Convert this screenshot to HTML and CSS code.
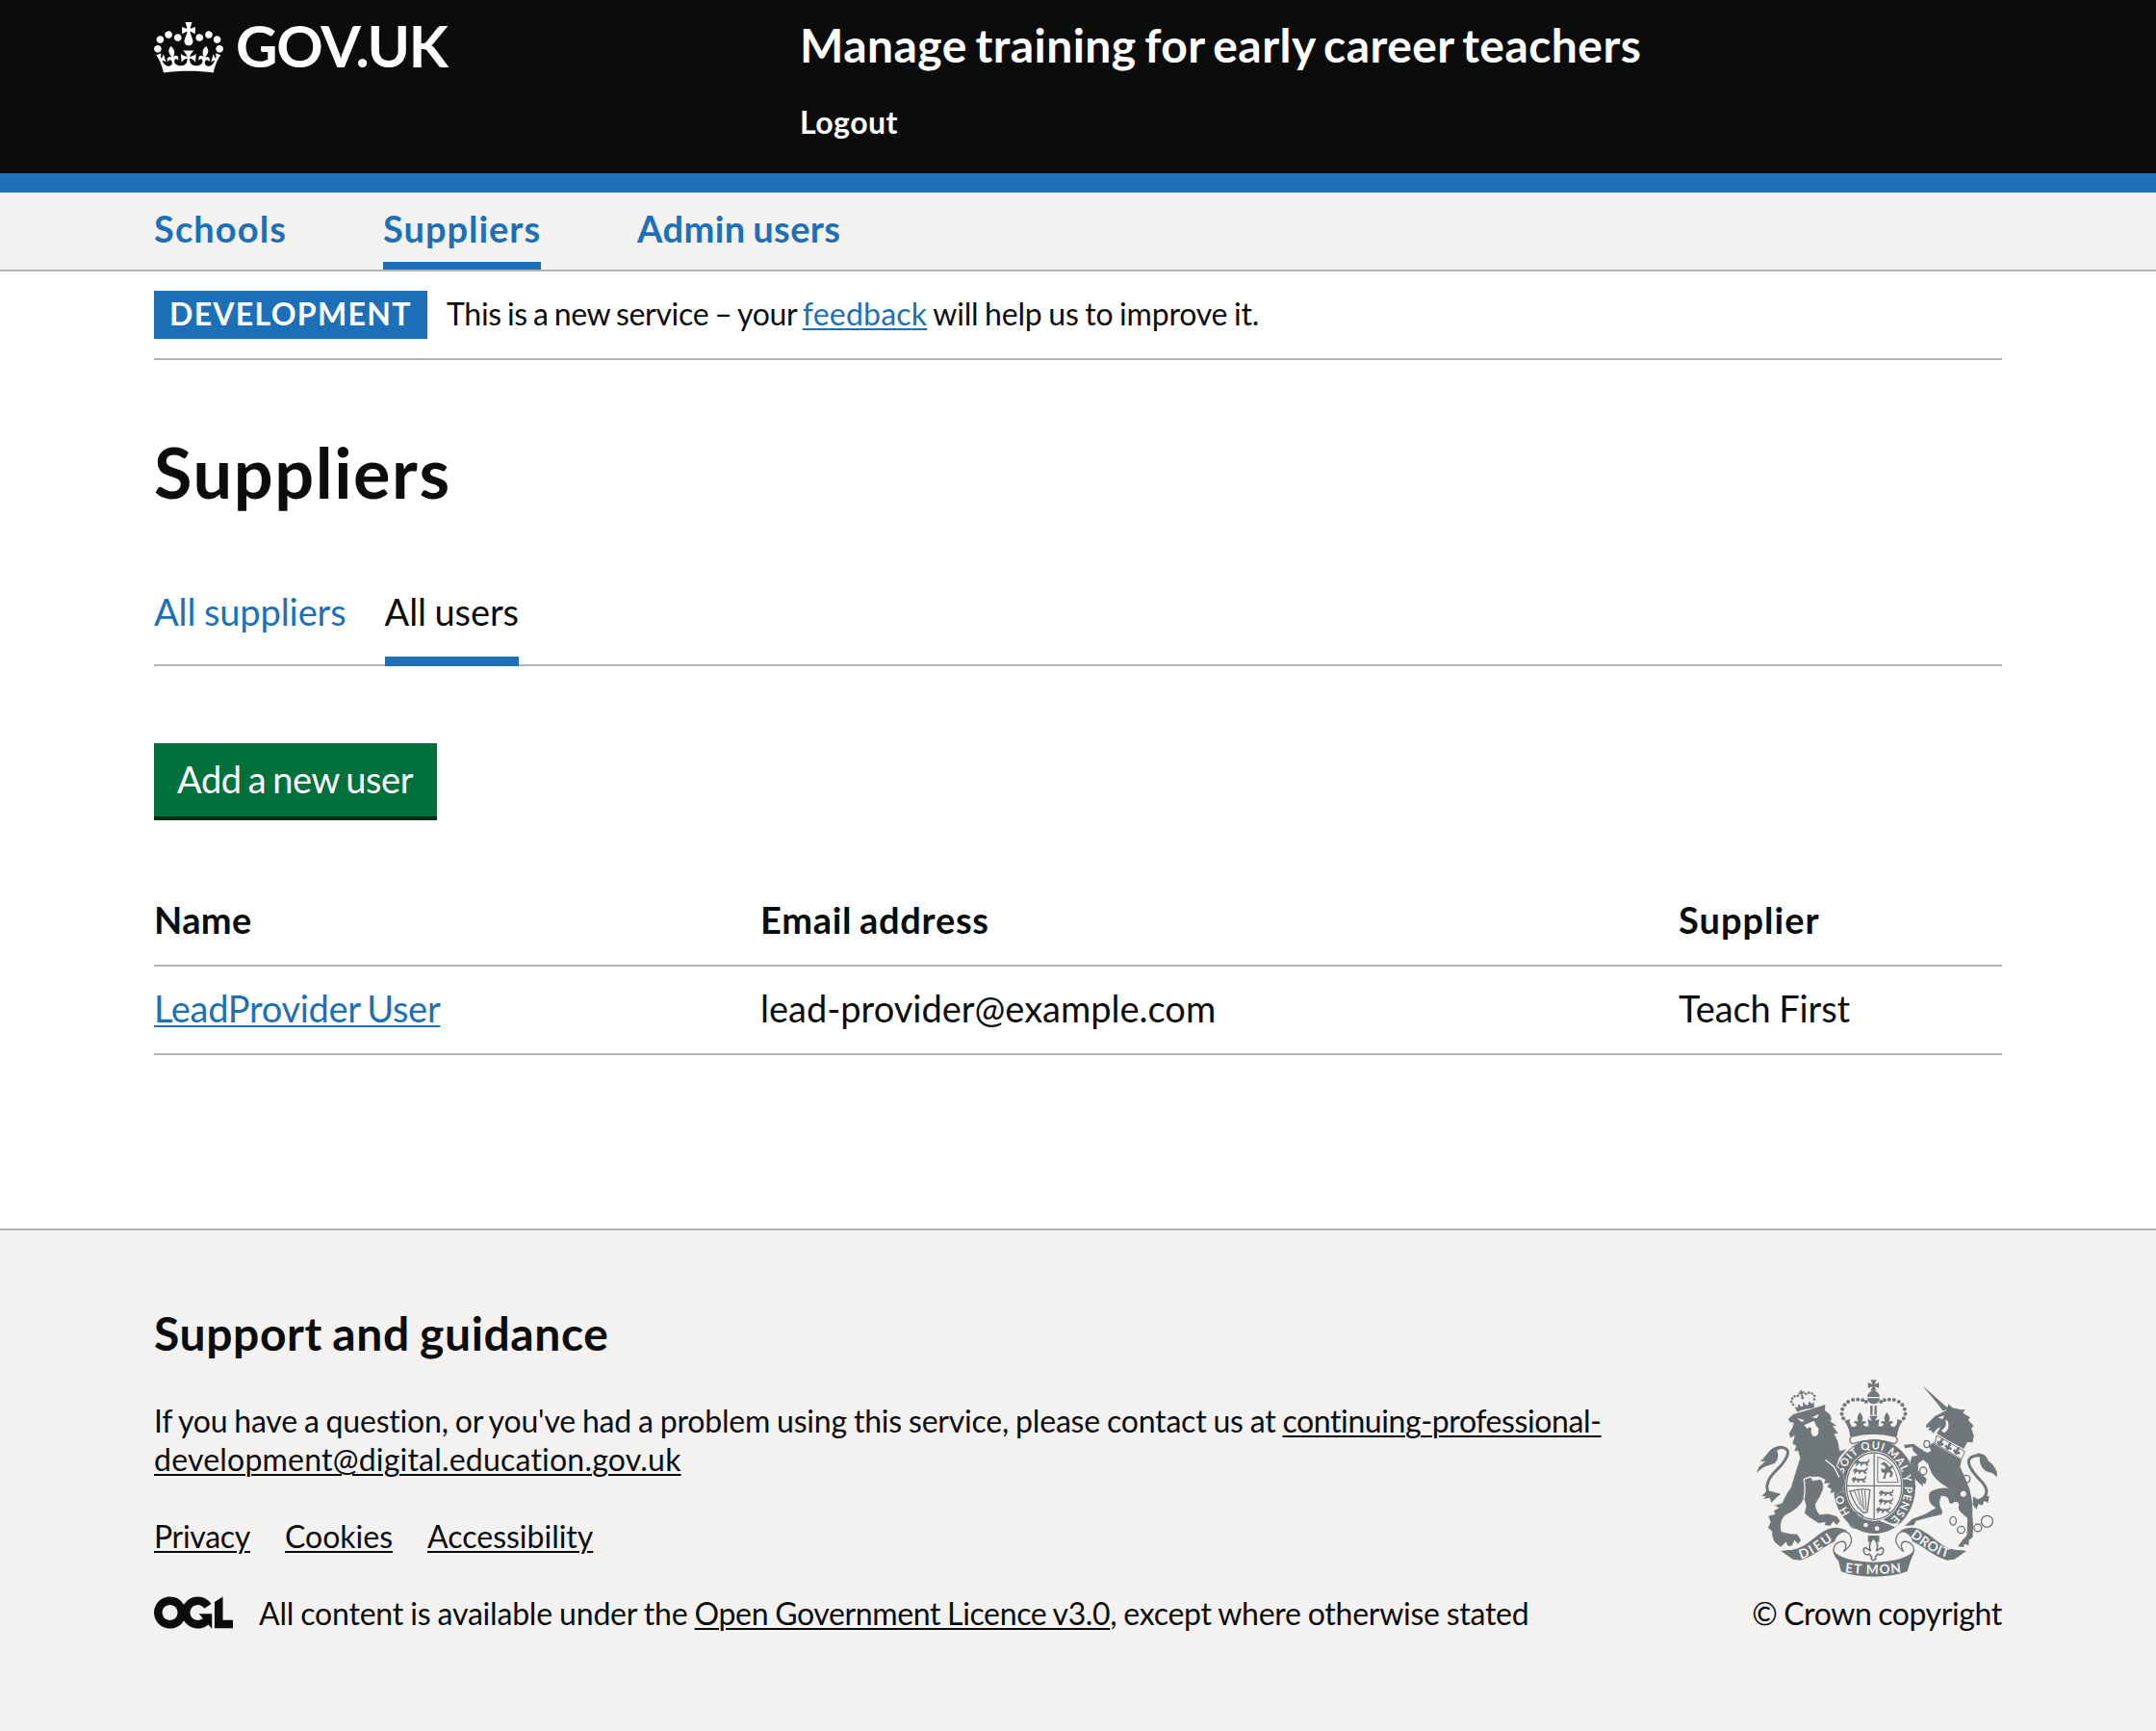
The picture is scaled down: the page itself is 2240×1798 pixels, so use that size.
FILE: index.html
```html
<!DOCTYPE html>
<html lang="en">
<head>
<meta charset="utf-8">
<title>Suppliers - Manage training for early career teachers</title>
<link rel="stylesheet" href="styles.css">
</head>
<body>
<header class="header">
  <div class="container header-inner">
    <a class="logo" href="#">
      <svg class="logo-crown" viewBox="0 0 132 97" aria-hidden="true"><path fill="currentColor" fill-rule="evenodd" d="M25 30.2c3.5 1.5 7.7-.2 9.1-3.7 1.5-3.6-.2-7.8-3.9-9.2-3.6-1.4-7.6.3-9.1 3.9-1.4 3.5.3 7.5 3.9 9zM9 39.5c3.6 1.5 7.8-.2 9.2-3.7 1.5-3.6-.2-7.8-3.9-9.1-3.6-1.5-7.6.2-9.1 3.8-1.4 3.5.3 7.5 3.8 9zM4.4 57.2c3.5 1.5 7.7-.2 9.1-3.8 1.5-3.6-.2-7.7-3.9-9.1-3.5-1.5-7.6.3-9.1 3.8-1.4 3.5.3 7.6 3.9 9.1zm38.3-21.4c3.5 1.5 7.7-.2 9.1-3.8 1.5-3.6-.2-7.7-3.9-9.1-3.6-1.5-7.6.3-9.1 3.8-1.3 3.6.4 7.7 3.9 9.1zm64.4-5.6c-3.6 1.5-7.8-.2-9.1-3.7-1.5-3.6.2-7.8 3.8-9.2 3.6-1.4 7.7.3 9.2 3.9 1.3 3.5-.4 7.5-3.9 9zm15.9 9.3c-3.6 1.5-7.7-.2-9.1-3.7-1.5-3.6.2-7.8 3.7-9.1 3.6-1.5 7.7.2 9.2 3.8 1.5 3.5-.3 7.5-3.8 9zm4.7 17.7c-3.6 1.5-7.8-.2-9.2-3.8-1.5-3.6.2-7.7 3.9-9.1 3.6-1.5 7.7.3 9.2 3.8 1.3 3.5-.4 7.6-3.9 9.1zM89.3 35.8c-3.6 1.5-7.8-.2-9.2-3.8-1.4-3.6.2-7.7 3.9-9.1 3.6-1.5 7.7.3 9.2 3.8 1.4 3.6-.3 7.7-3.9 9.1zM69.7 17.7l8.9 4.7V9.3l-8.9 2.8c-.2-.3-.5-.6-.9-.9L72.4 0H59.6l3.5 11.2c-.3.3-.6.5-.9.9l-8.8-2.8v13.1l8.8-4.7c.3.3.6.7.9.9l-5 15.4v.1c-.2.8-.4 1.6-.4 2.4 0 4.1 3.1 7.5 7 8.1h.2c.3 0 .7.1 1 .1.4 0 .7 0 1-.1h.2c4-.6 7.1-4.1 7.1-8.1 0-.8-.1-1.7-.4-2.4V34l-5.1-15.4c.4-.2.7-.6 1-.9zM66 92.8c16.9 0 32.8 1.1 47.1 3.2 4-16.9 8.9-26.7 14-33.5l-9.6-3.4c1 4.9 1.1 7.2 0 10.2-1.5-1.4-3-4.3-4.2-8.7L108.6 76c2.8-2 5-3.2 7.5-3.3-4.4 9.4-10 11.9-13.6 11.2-4.3-.8-6.3-4.6-5.6-7.9 1-4.7 5.7-5.9 8-.5 4.3-8.7-3-11.4-7.6-8.8 7.1-7.2 7.9-13.5 2.1-21.1-8 6.1-8.1 12.3-4.5 20.8-4.7-5.4-12.1-2.5-9.5 6.2 3.4-5.2 7.9-2 7.2 3.1-.6 4.3-6.4 7.8-13.5 7.2-10.3-.9-10.9-8-11.2-13.8 2.5-.5 7.1 1.8 11 7.3L80.2 60c-4.1 4.4-8 5.3-12.3 5.4 1.4-4.4 8-11.6 8-11.6H55.5s6.4 7.2 7.9 11.6c-4.2-.1-8-1-12.3-5.4l1.4 16.4c3.9-5.5 8.5-7.7 10.9-7.3-.3 5.8-.9 12.8-11.1 13.8-7.2.6-12.9-2.9-13.5-7.2-.7-5 3.8-8.3 7.1-3.1 2.7-8.7-4.6-11.6-9.4-6.2 3.7-8.5 3.6-14.7-4.6-20.8-5.8 7.6-5 13.9 2.2 21.1-4.7-2.6-11.9.1-7.7 8.8 2.3-5.5 7.1-4.2 8.1.5.7 3.3-1.3 7.1-5.7 7.9-3.5.7-9-1.8-13.5-11.2 2.5.1 4.7 1.3 7.5 3.3l-4.7-15.4c-1.2 4.4-2.7 7.2-4.3 8.7-1.1-3-.9-5.3 0-10.2l-9.5 3.4c5 6.9 9.9 16.7 14 33.5 14.8-2.1 30.8-3.2 47.7-3.2z"/></svg>
      <span class="logo-text">GOV.UK</span>
    </a>
    <div class="header-content">
      <a class="service-name" href="#">Manage training for early career teachers</a>
      <a class="logout" href="#">Logout</a>
    </div>
  </div>
</header>

<nav class="primary-nav">
  <div class="container primary-nav-list">
    <a class="primary-nav-item nav-schools" href="#">Schools</a>
    <a class="primary-nav-item nav-suppliers is-current" href="#">Suppliers</a>
    <a class="primary-nav-item nav-admin" href="#">Admin users</a>
  </div>
</nav>

<main class="container">
  <div class="phase-banner">
    <strong class="tag">DEVELOPMENT</strong>
    <p class="phase-text">This is a new service – your <a class="link feedback" href="#">feedback</a> <span class="phase-end">will help us to improve it.</span></p>
  </div>

  <h1 class="title">Suppliers</h1>

  <div class="tabs">
    <a class="tab" href="#">All suppliers</a>
    <a class="tab is-selected" href="#">All users</a>
  </div>

  <a class="button" href="#">Add a new user</a>

  <table class="table">
    <thead>
      <tr><th class="col-name head-name">Name</th><th class="col-email head-email">Email address</th><th class="head-supplier">Supplier</th></tr>
    </thead>
    <tbody>
      <tr><td class="cell-name"><a class="link" href="#">LeadProvider User</a></td><td>lead-provider@example.com</td><td class="cell-supplier">Teach First</td></tr>
    </tbody>
  </table>
</main>

<footer class="footer">
  <div class="container footer-inner">
    <div class="footer-main">
      <h2 class="footer-title">Support and guidance</h2>
      <p class="contact">If you have a question, or you've had a problem using this service, please contact us at <a class="footer-link mail" href="#"><span class="mail-start">continuing-professional-</span>development@digital.education.gov.uk</a></p>
      <div class="footer-links">
        <a class="footer-link privacy" href="#">Privacy</a>
        <a class="footer-link" href="#">Cookies</a>
        <a class="footer-link" href="#">Accessibility</a>
      </div>
      <div class="licence">
        <svg class="ogl" viewBox="0 0 483.2 195.7" aria-hidden="true"><path fill="currentColor" d="M421.5 142.8V.1l-50.7 32.3v161.1h112.4v-50.7zm-122.3-9.6A47.12 47.12 0 0 1 221 97.8c0-26 21.1-47.1 47.1-47.1 16.7 0 31.4 8.7 39.7 21.8l42.7-27.2A97.63 97.63 0 0 0 268.1 0c-36.5 0-68.3 20.1-85.1 49.7A98 98 0 0 0 97.8 0C43.9 0 0 43.9 0 97.8s43.9 97.8 97.8 97.8c36.5 0 68.3-20.1 85.1-49.7a97.76 97.76 0 0 0 149.6 25.4l19.4 22.2h3v-87.8h-80l24.3 27.5zM97.8 145c-26 0-47.1-21.1-47.1-47.1s21.1-47.1 47.1-47.1 47.1 21.1 47.1 47.1S123.8 145 97.8 145"/></svg>
        <p class="licence-text">All content is available under the <a class="footer-link ogl-link" href="#">Open Government Licence v3.0</a><span class="licence-end">, except where otherwise stated</span></p>
      </div>
    </div>
    <div class="copyright">
      <svg class="crest" viewBox="40 40 755 618" role="img" aria-label="Royal coat of arms">
        <defs>
          <path id="garter-start" d="M334 456A98 119 0 0 1 310 372"/>
          <path id="garter-arc" d="M313 335A98 119 0 1 1 466 469"/>
          <path id="scroll-left" d="M180 599C215 592 250 562 292 532"/>
          <path id="scroll-right" d="M521 528C562 560 605 592 655 597"/>
          <path id="scroll-mid" d="M318 640Q407 652 500 640"/>
          <g id="fleur"><path d="M0-22Q-9-10-5 0Q-12-6-16 2Q-16 10-9 8L-5 14H5L9 8Q16 10 16 2Q12-6 5 0Q9-10 0-22Z"/></g>
          <g id="pattee"><path d="M-9-17H9L3-3L17-9V9L3 3L9 17H-9L-3 3L-17 9V-9L-3-3Z"/></g>
          <path id="passant" d="M-24 2L-20-7L-12-9L-8-4L14-4L20-9L19-16L23-9L20-1L15 1L22 8L12 8L9 2L2 3L-2 9L-7 8L-4 2L-11 2L-17 9L-22 8L-16 2Z"/>
        </defs>

        <!-- imperial crown -->
        <use href="#pattee" x="407" y="58"/>
        <path d="M388 94A19 19 0 0 1 426 94ZM387 98H427Q423 116 407 116Q391 116 387 98Z"/>
        <g class="dots"><circle cx="384" cy="109" r="6"/><circle cx="373" cy="104" r="6"/><circle cx="358" cy="102" r="6"/><circle cx="343" cy="103" r="6"/><circle cx="328" cy="109" r="6"/><circle cx="317" cy="119" r="6"/><circle cx="310" cy="132" r="6"/><circle cx="308" cy="147" r="6"/><circle cx="313" cy="161" r="6"/><circle cx="430" cy="109" r="6"/><circle cx="441" cy="104" r="6"/><circle cx="456" cy="102" r="6"/><circle cx="471" cy="103" r="6"/><circle cx="486" cy="109" r="6"/><circle cx="497" cy="119" r="6"/><circle cx="504" cy="132" r="6"/><circle cx="506" cy="147" r="6"/><circle cx="501" cy="161" r="6"/></g>
        <path d="M397 121H404V150H397ZM410 121H417V150H410Z"/>
        <path d="M316 168L334 163Q330 175 340 186Q350 190 355 180Q351 173 345 176Q348 165 359 171Q352 156 365 142Q378 156 371 171Q382 165 385 176Q379 173 375 180Q382 190 392 184L389 163L402 168L394 153H420L412 168L425 163L422 184Q432 190 439 180Q435 173 429 176Q432 165 443 171Q436 156 449 142Q462 156 455 171Q466 165 469 176Q463 173 459 180Q464 190 474 186Q484 175 480 163L498 168Q483 190 480 218Q407 200 334 218Q332 190 316 168Z"/>
        <path class="line thin" d="M340 217Q407 200 474 217Q488 228 474 240Q407 218 340 240Q326 228 340 217Z"/>

        <!-- garter -->
        <ellipse cx="410" cy="373" rx="128" ry="147"/>
        <ellipse class="paper" cx="409" cy="372" rx="90" ry="109"/>
        <ellipse class="line thin" cx="409" cy="372" rx="86" ry="104"/>
        <path class="line thin" d="M409 270V474M324 371H495"/>
        <use href="#passant" x="372" y="300"/><use href="#passant" x="366" y="325"/><use href="#passant" x="362" y="352"/>
        <use href="#passant" x="447" y="394"/><use href="#passant" x="446" y="420"/><use href="#passant" x="438" y="447"/>
        <path class="line hair" d="M420 281Q475 292 484 360H420Z"/>
        <path d="M436 348L442 332L432 328L430 316L440 320L446 314L438 306L428 304L440 296L450 304L456 312L466 306L470 310L460 320L468 330L464 344L456 342L460 332L452 328L446 336L444 350Z"/>
        <path class="line thin" d="M335 388Q370 378 396 384L388 452Q374 460 366 444Q350 434 333 388Z"/>
        <path class="line hair" d="M348 388L366 432M359 386L373 440M370 385L378 446M380 385L384 448"/>
        <circle class="paper" cx="383" cy="493" r="7"/><circle class="paper" cx="418" cy="504" r="7"/>
        <path class="paper" d="M435 474Q465 494 490 487L474 500Q450 488 426 480Z"/>
        <g class="motto motto-garter">
          <text><textPath href="#garter-start" textLength="62">HO</textPath></text>
          <text><textPath href="#garter-arc" textLength="410">SOIT QUI MAL Y PENSE</textPath></text>
        </g>
        <path class="line thin" d="M340 455Q366 452 374 466L354 504Q334 502 330 482Q344 480 340 455ZM352 468L344 490"/>

        <!-- lion -->
        <g transform="rotate(-14 188 108)">
          <path d="M158 118L166 122L172 112L178 122L184 122L188 108L194 122L200 122L206 112L212 122L220 118L216 136Q188 130 162 136Z"/>
          <circle cx="155" cy="110" r="4"/><circle cx="152" cy="100" r="4"/><circle cx="157" cy="91" r="4"/><circle cx="166" cy="86" r="4"/><circle cx="176" cy="87" r="4"/><circle cx="202" cy="87" r="4"/><circle cx="212" cy="86" r="4"/><circle cx="221" cy="91" r="4"/><circle cx="226" cy="100" r="4"/><circle cx="223" cy="110" r="4"/>
          <path d="M185 73H193L191 79L198 77V85L191 83L193 100H184L187 83L180 85V77L187 79Z"/>
        </g>
        <path class="edge" d="M141 162L158 147L200 135L236 124L257 117L256 136L272 149L277 166L271 168L293 184L280 185L298 208L285 209L296 232L302 262L324 256L300 284L292 310L312 332L320 368L310 376L316 392L304 388L294 402L286 390L272 395L275 381L262 374L270 363L252 364L257 352L238 343L211 343L217 355L242 351Q254 362 249 384Q240 408 226 428Q226 448 240 461L264 458L292 465L303 480L292 494L282 482L272 496L254 494L257 484L236 488L208 470L192 456L197 432L190 410Q178 442 130 464Q112 486 120 514L146 520L170 522L181 540L172 553L161 541L152 559L139 558L134 546L118 562L98 546L91 528L90 512L78 502L86 484L79 465L100 459L96 449L112 440L98 432L122 425Q136 392 150 376Q160 340 178 285L172 262L160 263L166 246L154 240L161 215L148 222L143 208L154 190L158 175L145 172Z"/>
        <path class="paper" d="M168 160L192 166L184 173ZM214 158L237 147L231 160ZM190 182L222 168L228 184L236 192L234 210Q226 222 216 214L212 202L214 192L206 188L202 194Z"/>
        <path class="line pale" d="M257 290L284 312L300 344M211 343L190 350Q196 380 190 410"/>
        <path class="line tail" d="M95 408C62 386 74 352 102 325C134 294 156 258 125 252Q110 248 90 262"/>
        <path d="M126 250Q96 244 78 268L60 290L54 296L70 294L50 312L42 330L66 312L100 300Q116 280 106 262ZM76 385L58 404L72 402L64 412L84 408L88 424L104 408L118 396Z"/>

        <!-- unicorn -->
        <path d="M558 57L640 130L624 138L604 112Z"/>
        <path d="M571 182L598 154L622 142L634 136L641 116L652 127L680 134L692 132L686 144L708 158L702 166L719 184L712 192L720 214L716 236L700 234L688 256L660 240L602 212L616 188L606 192L592 208L587 198L577 198L584 188L572 190Z"/>
        <path class="paper" d="M608 158L628 152L622 164ZM630 166Q640 184 618 200L628 206Q648 190 638 168Z"/>
        <path d="M596 234L682 286L677 312L692 345L706 380Q718 420 715 460L718 500L716 532L704 540L704 556L690 552L688 562L670 560L686 538L698 526L700 472L676 450L668 430L642 424Q646 402 618 402Q606 428 622 450L620 460L570 472L540 480L532 494L504 496L528 474L566 460L602 440Q572 424 582 392Q600 376 642 378Q588 352 578 304L562 290L546 302L546 324L573 350L568 366L560 362L562 374L536 350L526 318L522 296L526 280L546 276L530 262L528 250L506 254L501 243L532 240L562 262L576 268L586 262L580 246Z"/>
        <path class="paper" d="M597 217L604 208L692 262L680 290L596 240Z"/>
        <path class="line hair" d="M604 214L692 264L681 288L598 238Z"/>
        <use href="#fleur" transform="translate(616 236) rotate(28) scale(.75)"/><use href="#fleur" transform="translate(641 249) rotate(28) scale(.75)"/><use href="#fleur" transform="translate(667 263) rotate(28) scale(.75)"/>
        <path class="line tail" d="M730 420C764 406 768 384 744 358C704 318 682 278 736 276"/>
        <path d="M728 270Q756 268 764 292L780 306L792 328V344L778 332L758 326Q736 310 738 282ZM768 404L764 424L752 418L746 432L734 428L728 444L716 430L718 404L736 416L758 402Z"/>
        <g class="chain"><ellipse cx="573" cy="241" rx="9" ry="11"/><ellipse cx="552" cy="268" rx="8" ry="11"/><ellipse cx="562" cy="325" rx="11" ry="12"/><ellipse cx="696" cy="350" rx="12" ry="12"/><ellipse cx="655" cy="480" rx="10" ry="13"/><ellipse cx="680" cy="508" rx="12" ry="11"/><ellipse cx="732" cy="502" rx="12" ry="12"/><circle cx="761" cy="482" r="18"/></g>
        <circle class="paper" cx="687" cy="396" r="9"/><circle class="paper" cx="663" cy="431" r="10"/>

        <!-- pendant and scroll -->
        <path d="M390 526H425V546H390Z"/>
        <path class="paper-line" d="M407 534Q388 552 398 574Q376 556 376 572Q378 590 394 584L401 592A7 7 0 1 0 413 592L420 584Q436 590 438 572Q438 556 416 574Q426 552 407 534Z"/>
        <g id="ribbon">
          <path d="M118 574L140 571C196 572 224 520 270 504Q300 496 326 512Q292 518 286 545C252 560 220 592 178 603L156 600Z"/>
          <path class="line thin" d="M300 512Q340 510 338 546Q334 560 314 576Q330 548 310 544Q282 548 282 572Q286 592 300 602"/>
        </g>
        <use href="#ribbon" transform="matrix(-1 0 0 1 815 0)"/>
        <path d="M282 572Q304 606 407 609Q510 606 533 572Q530 590 522 606L512 638Q470 654 407 654Q344 654 306 638L298 606Q284 590 282 572Z"/>
        <g class="motto motto-scroll">
          <text><textPath href="#scroll-left" textLength="118">DIEU</textPath></text>
          <text><textPath href="#scroll-mid" textLength="176">ET MON</textPath></text>
          <text><textPath href="#scroll-right" textLength="136">DROIT</textPath></text>
        </g>
      </svg>
      <span class="copyright-text">© Crown copyright</span>
    </div>
  </div>
</footer>
</body>
</html>
```
FILE: styles.css
```css
:root {
  --ink: #0b0c0c;
  --blue: #1d70b8;
  --grey: #f3f2f1;
  --border: #b1b4b6;
  --crest: #6f777b;
}

* { box-sizing: border-box; }

body {
  margin: 0;
  background: #fff;
  color: var(--ink);
  font-family: Lato, "Liberation Sans", sans-serif;
  font-size: 38px;
  line-height: 50px;
}

h1, h2, p { margin: 0; }
a { color: inherit; text-decoration: none; }

.container { width: 1920px; margin: 0 auto; }

/* Header */
.header {
  height: 200px;
  background: var(--ink);
  border-bottom: 20px solid var(--blue);
  color: #fff;
  font-weight: 700;
}
.header-inner { display: grid; grid-template-columns: 671px 1fr; padding-top: 17px; }
.logo { display: flex; align-items: flex-start; gap: 13px; }
.logo-crown { width: 72px; height: 53px; margin-top: 6px; }
.logo-text { font-size: 60px; line-height: 60px; letter-spacing: -1.2px; }
.header-content { display: flex; flex-direction: column; align-items: flex-start; gap: 30px; }
.service-name { font-size: 48px; line-height: 60px; letter-spacing: .45px; word-spacing: -3.5px; }
.logout { font-size: 32px; line-height: 40px; letter-spacing: .5px; }

/* Primary navigation */
.primary-nav { background: var(--grey); border-bottom: 2px solid var(--border); }
.primary-nav-list { display: flex; gap: 100px; }
.primary-nav-item {
  height: 80px;
  padding-top: 12px;
  border-bottom: 8px solid transparent;
  color: var(--blue);
  font-weight: 700;
}
.primary-nav-item.is-current { border-color: var(--blue); }
.nav-schools { letter-spacing: 1.1px; }
.nav-suppliers { letter-spacing: .97px; }
.nav-admin { letter-spacing: .4px; word-spacing: -2px; }

/* Phase banner */
.phase-banner {
  display: flex;
  align-items: flex-start;
  gap: 20px;
  padding: 20px 0;
  border-bottom: 2px solid var(--border);
  font-size: 32px;
  line-height: 40px;
}
.tag {
  width: 284px;
  padding: 4px 16px 6px;
  background: var(--blue);
  color: #fff;
  letter-spacing: 1.3px;
}
.phase-text { padding-top: 4px; letter-spacing: -.3px; word-spacing: -1.8px; }
.phase-end { letter-spacing: -.2px; word-spacing: -1.3px; }
.link { color: var(--blue); text-decoration: underline; text-decoration-thickness: 2px; text-underline-offset: 3px; }
.feedback { letter-spacing: .2px; }

.title { margin-top: 79px; font-size: 72px; line-height: 75px; letter-spacing: 1.6px; }

/* Section tabs */
.tabs { display: flex; gap: 40px; margin-top: 82px; border-bottom: 2px solid var(--border); letter-spacing: -.1px; word-spacing: -1px; }
.tab { margin-bottom: -2px; padding-bottom: 22px; border-bottom: 10px solid transparent; color: var(--blue); }
.tab.is-selected { border-color: var(--blue); color: var(--ink); }

.button {
  display: block;
  width: 294px;
  margin-top: 80px;
  padding: 12px 24px 14px;
  background: #00703c;
  border-bottom: 4px solid #002d18;
  color: #fff;
  letter-spacing: -.4px;
  word-spacing: -2.3px;
  white-space: nowrap;
}

/* Users table */
.table { width: 100%; margin-top: 60px; border-collapse: separate; border-spacing: 0; table-layout: fixed; }
.table th, .table td { padding: 18px 0 22px; border-bottom: 2px solid var(--border); text-align: left; }
.col-name { width: 630px; }
.col-email { width: 954px; }
.head-name { letter-spacing: .4px; }
.head-email { letter-spacing: .7px; word-spacing: -2px; }
.head-supplier { letter-spacing: 1px; }
.cell-name { letter-spacing: -.3px; word-spacing: -2.3px; }
.cell-supplier { letter-spacing: -.1px; word-spacing: -1px; }

/* Footer */
.footer {
  min-height: 522px;
  margin-top: 180px;
  padding-top: 77px;
  background: var(--grey);
  border-top: 2px solid var(--border);
  font-size: 32px;
  line-height: 40px;
}
.footer-inner { display: flex; justify-content: space-between; align-items: flex-end; }
.footer-main { display: flex; flex-direction: column; gap: 40px; width: 1600px; }
.footer-title { margin-bottom: 1px; font-size: 48px; line-height: 60px; letter-spacing: .6px; word-spacing: -2px; }
.footer-link { text-decoration: underline; text-decoration-thickness: 2px; text-underline-offset: 3px; }
.contact { letter-spacing: -.2px; word-spacing: -1px; }
.mail { letter-spacing: .21px; }
.mail-start { letter-spacing: -.4px; }
.footer-links { display: flex; gap: 36px; }
.privacy { letter-spacing: -.3px; }
.licence { display: flex; gap: 27px; }
.ogl { width: 82px; height: 34px; margin-top: 2px; }
.licence-text { letter-spacing: -.2px; word-spacing: -.8px; }
.ogl-link { letter-spacing: -.37px; }
.licence-end { letter-spacing: -.27px; }
.copyright { display: flex; flex-direction: column; align-items: center; gap: 17px; width: 260px; }
.copyright-text { letter-spacing: -.4px; word-spacing: -1px; white-space: nowrap; }

/* Coat of arms */
.crest { width: 252px; height: 206px; fill: var(--crest); }
.crest .paper { fill: var(--grey); }
.crest .line { fill: none; stroke: var(--crest); }
.crest .thin { stroke-width: 4px; }
.crest .hair { stroke-width: 3px; }
.crest .tail { stroke-width: 9px; }
.crest .pale { stroke: var(--grey); stroke-width: 4px; }
.crest .edge { stroke: var(--grey); stroke-width: 1px; }
.crest .paper-line { fill: var(--grey); stroke: var(--crest); stroke-width: 5px; }
.crest .chain { fill: none; stroke: var(--crest); stroke-width: 4px; }
.motto { fill: var(--grey); font-weight: 700; }
.motto-garter { font-size: 34px; }
.motto-scroll { font-size: 41px; }
```
